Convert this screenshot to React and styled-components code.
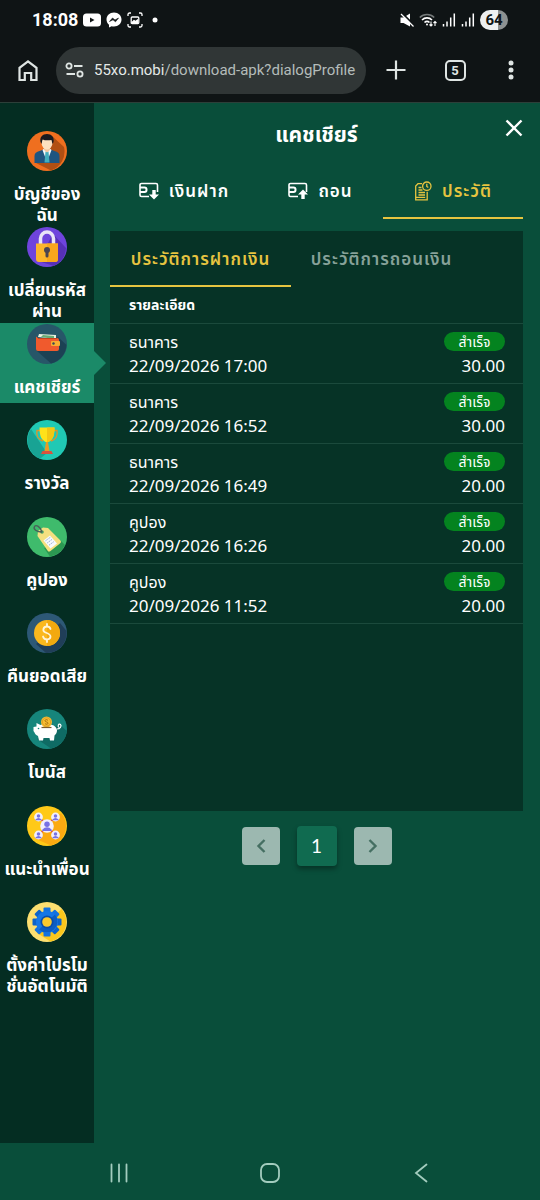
import React from "react";
import styled, { createGlobalStyle, css } from "styled-components";

const color = {
  chrome: "#0f1415",
  pill: "#303636",
  page: "#094e3a",
  side: "#042d22",
  panel: "#063326",
  active: "#1b8a68",
  gold: "#e6c440",
  line: "#1b4a3c",
  white: "#ffffff",
};

const GlobalStyle = createGlobalStyle`
  *, *::before, *::after { box-sizing: border-box; }
  body { margin: 0; background: ${color.page}; }
  button { font: inherit; color: inherit; background: none; border: 0; padding: 0; cursor: pointer; }
  svg { display: block; flex: none; }
`;

const Page = styled.div`
  min-height: 100vh;
  display: flex;
  flex-direction: column;
  color: ${color.white};
  background: ${color.page};
  font-family: Inter, "Noto Sans Thai", "Noto Sans", sans-serif;
  font-size: 16px;
`;

/* device status bar */
const StatusBar = styled.div`
  height: 40px;
  padding: 0 32px;
  display: flex;
  align-items: center;
  justify-content: space-between;
  background: ${color.chrome};
  font-family: Roboto, sans-serif;
`;
const StatusGroup = styled.div`
  display: flex;
  align-items: center;
  gap: 5px;
`;
const Clock = styled.span`
  font-size: 18px;
  font-weight: 700;
  line-height: 20px;
`;
const Battery = styled.span`
  width: 28px;
  height: 20px;
  border-radius: 10px;
  color: ${color.chrome};
  background: linear-gradient(90deg, #eef0f0 64%, #8d9191 64%);
  font-size: 15px;
  font-weight: 700;
  line-height: 20px;
  text-align: center;
`;

/* browser toolbar */
const Toolbar = styled.header`
  height: 63px;
  padding: 7px 17px 9px 16px;
  display: flex;
  align-items: center;
  background: ${color.chrome};
  border-bottom: 1px solid #2c3f39;
  color: #dfe5e3;
  font-family: Roboto, sans-serif;
`;
const AddressBar = styled.button`
  flex: 1;
  min-width: 0;
  height: 47px;
  margin-left: 16px;
  padding: 0 8px 0 9px;
  display: flex;
  align-items: center;
  gap: 9px;
  border-radius: 24px;
  background: ${color.pill};
`;
const Url = styled.span`
  flex: 1;
  min-width: 0;
  overflow: hidden;
  white-space: nowrap;
  text-align: left;
  font-size: 15px;
  line-height: 24px;
  color: #b4bcba;
`;
const Host = styled.span`
  color: #e4e9e7;
`;
const ToolButton = styled.button`
  width: 24px;
  height: 24px;
  margin-left: ${(p) => p.$space || 0}px;
  display: grid;
  place-items: center;
`;
const TabCount = styled.span`
  width: 21px;
  height: 21px;
  border: 2px solid currentColor;
  border-radius: 5px;
  font-size: 13px;
  font-weight: 700;
  line-height: 17px;
`;

/* body */
const Body = styled.div`
  flex: 1;
  display: flex;
`;
const Sidebar = styled.nav`
  width: 94px;
  flex: none;
  padding-top: 27px;
  background: ${color.side};
`;
const SideList = styled.ul`
  min-height: 851px;
  margin: 0;
  padding: 0;
  list-style: none;
  display: flex;
  flex-direction: column;
  justify-content: space-between;
`;
const SideItem = styled.li`
  height: 80px;
`;
const SideButton = styled.button`
  position: relative;
  width: 100%;
  height: 80px;
  padding-top: 1px;
  display: flex;
  flex-direction: column;
  align-items: center;
  gap: 13px;
  font-size: 17px;
  font-weight: 700;
  line-height: 21px;
  white-space: pre;
  ${(p) =>
    p.$active &&
    css`
      background: ${color.active};
      &::after {
        content: "";
        position: absolute;
        left: 100%;
        top: 28px;
        border: 12px solid transparent;
        border-right-width: 0;
        border-left-color: ${color.active};
      }
    `}
`;

const Main = styled.main`
  flex: 1;
  min-width: 0;
  padding: 0 17px 24px 16px;
  display: flex;
  flex-direction: column;
`;
const TitleBar = styled.div`
  height: 60px;
  display: grid;
  grid-template-columns: 24px 1fr 24px;
  align-items: center;
`;
const Title = styled.h1`
  grid-column: 2;
  margin: 0;
  padding-top: 4px;
  text-align: center;
  font-size: 21px;
  font-weight: 700;
  line-height: 28px;
`;
const CloseButton = styled.button`
  height: 24px;
  margin-bottom: 10px;
  display: flex;
  align-items: center;
  justify-content: flex-end;
`;
const Tabs = styled.div`
  height: 56px;
  display: grid;
  grid-template-columns: 148fr 125fr 140fr;
`;
const tabLook = css`
  padding-top: 2px;
  border-bottom: 2px solid ${(p) => (p.$active ? color.gold : "transparent")};
  color: ${(p) => (p.$active ? color.gold : p.$idle || color.white)};
  font-size: 17px;
  font-weight: 600;
  line-height: 24px;
  letter-spacing: 1px;
  white-space: nowrap;
`;
const Tab = styled.button`
  ${tabLook}
  display: flex;
  align-items: center;
  justify-content: center;
  gap: 10px;
`;
const Panel = styled.section`
  min-height: 580px;
  margin-top: 12px;
  background: ${color.panel};
`;
const SubTabs = styled.div`
  height: 56px;
  display: flex;
`;
const SubTab = styled.button`
  ${tabLook}
  min-width: 181px;
`;
const History = styled.table`
  width: 100%;
  border-collapse: collapse;
`;
const HeadCell = styled.th`
  height: 36px;
  padding: 0 19px;
  border-bottom: 1px solid ${color.line};
  text-align: left;
  font-size: 14px;
  font-weight: 700;
  line-height: 20px;
`;
const Cell = styled.td`
  height: 60px;
  padding: 6px 18px 4px 19px;
  border-bottom: 1px solid ${color.line};
  text-align: ${(p) => (p.$end ? "right" : "left")};
  vertical-align: top;
  font-size: 16px;
  line-height: 24px;
`;
const Line = styled.div`
  height: 24px;
  display: flex;
  align-items: center;
  justify-content: ${(p) => (p.$end ? "flex-end" : "flex-start")};
`;
const Figure = styled(Line)`
  font-family: "Noto Sans", sans-serif;
  font-size: 17px;
`;
const Badge = styled.span`
  width: 61px;
  height: 19px;
  border-radius: 10px;
  background: #04831f;
  font-size: 14px;
  line-height: 19px;
  text-align: center;
`;

const Pagination = styled.nav`
  margin-top: 15px;
  display: flex;
  align-items: center;
  justify-content: center;
  gap: 17px;
`;
const PageArrow = styled.button`
  width: 38px;
  height: 38px;
  display: grid;
  place-items: center;
  border-radius: 4px;
  background: #9cb8b0;
  color: #456f62;
`;
const PageNumber = styled.button`
  width: 40px;
  height: 40px;
  border-radius: 4px;
  background: #106b50;
  box-shadow: 0 3px 5px rgba(0, 0, 0, 0.35);
  font-family: Lato, sans-serif;
  font-size: 19px;
  line-height: 40px;
`;

const SystemNav = styled.footer`
  height: 57px;
  padding: 2px 8% 0;
  display: grid;
  grid-template-columns: repeat(3, 1fr);
  place-items: center;
  color: #a3ccbe;
`;

/* sidebar drawings */
const Disc = ({ fill, shade, shadeFill, children }) => (
  <svg width="40" height="40" viewBox="0 0 40 40" aria-hidden="true">
    <circle cx="20" cy="20" r="20" fill={fill} />
    {shade && <path d={shade} fill={shadeFill} />}
    {children}
  </svg>
);

const AccountIcon = () => (
  <Disc fill="#ef6f1f" shade="M25 5l12 11a20 20 0 0 1-13 23.500L9 32z" shadeFill="#b14f13">
    <path d="M7.500 32v-7c0-3 2-4 5-5l4-1.500h7l4 1.500c3 1 5 2 5 5v7z" fill="#1f5580" />
    <path d="M15.500 19l4.500 12 4.500-12-2-2h-5z" fill="#f4f8fa" />
    <path d="M18.500 20.500h3l1 11h-5z" fill="#41aebe" />
    <path d="M17 14h6v5l-3 2.500-3-2.500z" fill="#f3c69f" />
    <ellipse cx="20" cy="12" rx="5.500" ry="6.500" fill="#fde0bf" />
    <path d="M13.500 11c-1-5 2-8 6.500-8s7.500 3 6.500 8l-1 2-1-4c-3 .5-7 .5-9-.5l-1 4.500z" fill="#191b20" />
  </Disc>
);
const LockIcon = () => (
  <Disc fill="#6f44dc" shade="M26 7l13 14a20 20 0 0 1-12 18L11 34z" shadeFill="#5730b6">
    <path d="M13.500 18v-6.500a6.500 6.500 0 0 1 13 0V18" fill="none" stroke="#e9e4f7" strokeWidth="3.500" />
    <path d="M9 16.500h22V32a3 3 0 0 1-3 3H12a3 3 0 0 1-3-3z" fill="#fcb52b" />
    <path d="M20 16.500h11V32a3 3 0 0 1-3 3h-8z" fill="#f8a61c" />
    <circle cx="20" cy="23" r="3" fill="#4a4450" />
    <path d="M18.500 23h3v6a1.500 1.500 0 0 1-3 0z" fill="#4a4450" />
  </Disc>
);
const WalletIcon = () => (
  <Disc fill="#275668" shade="M31 13l8.500 8A20 20 0 0 1 24 39.500L10 27z" shadeFill="#1c4254">
    <path d="M11 13l1-3 17 1v4z" fill="#e8f1df" />
    <path d="M14 13l2-2 11 1v3z" fill="#68ab76" />
    <path d="M9 12.500l2 1.500h19a2 2 0 0 1 2 2v9a2 2 0 0 1-2 2H11a2 2 0 0 1-2-2z" fill="#f05a2d" />
    <path d="M11 14.500h19" stroke="#c7411d" strokeWidth="1" />
    <rect x="24" y="17" width="9" height="5" rx="1" fill="#f8ad32" />
    <circle cx="26.500" cy="19.500" r="1.200" fill="#374956" />
  </Disc>
);
const TrophyIcon = () => (
  <Disc fill="#20c9b4" shade="M4 9l16 24-7 5.700A20 20 0 0 1 4 9z" shadeFill="#18a394">
    <path d="M13 10.500h-3c-1 5 1.500 9 6 10.500M27 10.500h3c1 5-1.500 9-6 10.500" fill="none" stroke="#e0922a" strokeWidth="1.400" />
    <path d="M12.500 7.500h15c0 9-2 13-7.500 15-5.500-2-7.500-6-7.500-15z" fill="#ffe11a" />
    <path d="M20 7.500h7.500c0 9-2 13-7.500 15z" fill="#f3c714" />
    <path d="M19 22h2l1.500 9h-5z" fill="#e99b25" />
    <path d="M15.500 31h9l1.500 3H14z" fill="#d9533d" />
  </Disc>
);
const CouponIcon = () => (
  <Disc fill="#3fbb6c" shade="M33 23l5 5a20 20 0 0 1-15 11.500L17 31z" shadeFill="#2c9852">
    <path d="M11 14l5-3.500 5 .5L33.500 23.500a2 2 0 0 1-.3 2.800L23.500 34a2 2 0 0 1-3-.6L10.500 19z" fill="#f4e080" />
    <path d="M16.500 23.500l6.500-5 7 8-6.500 5z" fill="#f7fafd" />
    <path d="M18.500 23.800l5-3.600M20.200 26l5-3.700M22 28.200l5-3.700" stroke="#9db2d3" strokeWidth="1" strokeDasharray="1.500 .7" />
    <circle cx="15" cy="15" r="1.800" fill="#47a365" />
    <path d="M15 15C9.500 15 6 12 7.500 9.500S13.500 10 15 15" fill="none" stroke="#49615a" strokeWidth="1.400" />
  </Disc>
);
const RefundIcon = () => (
  <Disc fill="#2d5876" shade="M33 10l6.500 8A20 20 0 0 1 19 40l-10-9z" shadeFill="#203e58">
    <circle cx="20" cy="20" r="13" fill="#fbb81e" />
    <path d="M20 7a13 13 0 0 1 0 26z" fill="#f3a90f" />
    <path d="M23.500 16c-.5-2-2-2.500-3.500-2.500-4 0-5 4.500-1.500 6 3 1 5 1.800 5 4 0 3.800-6.500 4-7.500 0M20 11v2.500M20 26.500V29" fill="none" stroke="#fff4d7" strokeWidth="1.800" strokeLinecap="round" />
  </Disc>
);
const BonusIcon = () => (
  <Disc fill="#16857b" shade="M32 15l7.800 7A20 20 0 0 1 24 39.500L10 30z" shadeFill="#0f6b64">
    <path d="M9.500 14l4 2c3-1.500 12-1.500 15 2 3 3 1 7-1 8.500l-.5 5h-4l-.5-2.500h-6l-.5 2.500h-4l-1-4.500c-2-1-3-2-3.500-3.500L6.500 22v-4l3-.5z" fill="#fff" />
    <circle cx="19.500" cy="13" r="5.500" fill="#f6bc32" />
    <circle cx="19.500" cy="13" r="4.200" fill="none" stroke="#d4951f" strokeWidth=".7" />
    <path d="M21 11.500c-1-1.500-3-1-3 .2 0 1.500 3 1 3 2.500 0 1.300-2.200 1.500-3 .2" fill="none" stroke="#a36c12" strokeWidth=".9" />
    <path d="M14.500 18.500h10" stroke="#7e5b29" strokeWidth="1.200" />
    <circle cx="11.500" cy="19.500" r=".8" fill="#16857b" />
    <path d="M30 20c3 0 5-3 3.500-4.500S30 17 32 18.500" fill="none" stroke="#fff" strokeWidth="1.200" />
  </Disc>
);
const Person = ({ x, y, r }) => (
  <g>
    <circle cx={x} cy={y} r={r} fill="#f1effc" />
    <circle cx={x} cy={y - r * 0.25} r={r * 0.4} fill="#7671e4" />
    <path d={`M${x - r * 0.7} ${y + r * 0.75}v-${r * 0.2}q${r * 0.7}-${r * 0.7} ${r * 1.4} 0v${r * 0.2}z`} fill="#7671e4" />
  </g>
);
const FriendsIcon = () => (
  <Disc fill="#ffc918" shade="M34 7a20 20 0 0 1-10 32.500L9 33z" shadeFill="#fbaa12">
    <path d="M12 11l16 18M28 11L12 29" stroke="#db4f43" strokeWidth="1.800" />
    <Person x={11.5} y={11} r={4.4} />
    <Person x={28.5} y={11} r={4.4} />
    <Person x={11.5} y={29} r={4.4} />
    <Person x={28.5} y={29} r={4.4} />
    <Person x={20} y={20} r={6.8} />
  </Disc>
);
const SettingsIcon = () => (
  <Disc fill="#fddf70" shade="M34.500 7a20 20 0 0 1-11 32.500L10 31z" shadeFill="#fbc71c">
    {[0, 45, 90, 135].map((angle) => (
      <rect key={angle} x="16.500" y="5.500" width="7" height="29" rx="1" fill={angle > 45 ? "#0d63c9" : "#1472df"} transform={`rotate(${angle} 20 20)`} />
    ))}
    <circle cx="20" cy="20" r="11" fill="#1677e6" />
    <path d="M28 12.500A11 11 0 0 1 12 27.500z" fill="#0d5dc2" />
    <circle cx="20" cy="20" r="6.500" fill="#0c4da8" />
    <circle cx="20" cy="20" r="4.800" fill="#fcc92d" />
  </Disc>
);

/* line drawings */
const CardArrowIcon = ({ up }) => (
  <svg width="20" height="18" viewBox="0 0 20 18" fill="none" stroke="currentColor" strokeWidth="1.600" aria-hidden="true">
    <path d="M18.500 10V3A1.500 1.500 0 0 0 17 1.500H2.500A1.500 1.500 0 0 0 1 3v10a1.500 1.500 0 0 0 1.500 1.500H10" />
    <path d="M1 5.500h4.500a2 2 0 0 1 2 2v.5a2 2 0 0 1-2 2H1" strokeWidth="2" />
    <path d={up ? "M15 7.500l5 5h-3.300v4.500h-3.400v-4.500H10z" : "M15 17.500l5-5h-3.300V8h-3.400v4.500H10z"} fill="currentColor" stroke="none" />
  </svg>
);
const HistoryIcon = () => (
  <svg width="18" height="20" viewBox="0 0 18 20" fill="none" stroke="currentColor" strokeWidth="1.300" aria-hidden="true">
    <path d="M8 2.700H4L1.700 5v13.800h11.500v-8M1.700 16.300h9.500M4.500 6.500h3M4.500 9h4M4.500 11.500h6.500M4.500 14h6.500" />
    <circle cx="12.800" cy="5.200" r="4.200" />
    <path d="M12.800 2.800v2.700l1.500 1" />
  </svg>
);
const CloseIcon = () => (
  <svg width="18" height="18" viewBox="0 0 18 18" stroke="#fff" strokeWidth="2.400" aria-hidden="true">
    <path d="M1.500 1.500l15 15M16.500 1.500l-15 15" />
  </svg>
);
const Chevron = ({ next }) => (
  <svg width="10" height="14" viewBox="0 0 10 14" fill="none" stroke="currentColor" strokeWidth="2.400" aria-hidden="true">
    <path d={next ? "M1.500 1l6 6-6 6" : "M8.500 1l-6 6 6 6"} />
  </svg>
);

const YoutubeIcon = () => (
  <svg width="18" height="14" viewBox="0 0 18 14" aria-hidden="true">
    <rect width="18" height="13" y=".5" rx="3.500" fill="#fff" />
    <path d="M7 4.500l4.500 2.500L7 9.500z" fill={color.chrome} />
  </svg>
);
const MessengerIcon = () => (
  <svg width="16" height="16" viewBox="0 0 16 16" aria-hidden="true">
    <path d="M8 .5C3.600.5.5 3.600.5 7.500c0 2.200 1 4 2.500 5.300V15.500l2.600-1.300c.8.2 1.600.3 2.400.3 4.400 0 7.500-3 7.500-7S12.400.5 8 .5z" fill="#fff" />
    <path d="M3.500 9.500l3-3.500 2.500 2 3.500-2-3 3.800-2.500-2z" fill={color.chrome} stroke={color.chrome} strokeWidth=".6" />
  </svg>
);
const CaptureIcon = () => (
  <svg width="16" height="16" viewBox="0 0 16 16" fill="none" stroke="#fff" strokeWidth="1.300" aria-hidden="true">
    <path d="M1 4V2.500A1.500 1.500 0 0 1 2.500 1H4M12 1h1.500A1.500 1.500 0 0 1 15 2.500V4M15 12v1.500a1.500 1.500 0 0 1-1.500 1.500H12M4 15H2.500A1.500 1.500 0 0 1 1 13.500V12" />
    <rect x="4.200" y="5" width="7.600" height="6.500" rx="1" />
    <path d="M5 10.500l2-2 1.500 1L10.500 8v2.500z" fill="#fff" />
  </svg>
);
const DotIcon = () => (
  <svg width="14" height="6" viewBox="0 0 14 6" aria-hidden="true">
    <circle cx="7" cy="3" r="2.500" fill="#fff" />
  </svg>
);
const MuteIcon = () => (
  <svg width="14" height="14" viewBox="0 0 14 14" aria-hidden="true">
    <path d="M.5 4.500H3.500L10 .5v13L3.500 10H.5z" fill="#fff" />
    <path d="M2.500.5l12 12" stroke={color.chrome} strokeWidth="1.800" />
    <path d="M1 1l12.500 12.500" stroke="#fff" strokeWidth="1.300" />
  </svg>
);
const WifiIcon = () => (
  <svg width="18" height="14" viewBox="0 0 18 14" fill="none" stroke="#fff" strokeWidth="1.600" aria-hidden="true">
    <path d="M.8 4.500a10 10 0 0 1 14.400 0" stroke="#757a7a" />
    <path d="M3 7a7 7 0 0 1 10 0M5.500 9.500a3.600 3.600 0 0 1 5 0" />
    <circle cx="8" cy="11.500" r="1" fill="#fff" stroke="none" />
    <path d="M12 8.500v4.500M10.500 11.500l1.500 1.500 1.500-1.500M16 13V8.500M14.500 10L16 8.500l1.500 1.500" strokeWidth="1.100" />
  </svg>
);
const SignalIcon = () => (
  <svg width="14" height="14" viewBox="0 0 14 14" stroke="#fff" strokeWidth="1.500" aria-hidden="true">
    <path d="M1.500 11v2.500M5 8.500v5M8.700 4.500v9M12.300.5v13" />
  </svg>
);
const HomeIcon = () => (
  <svg width="22" height="23" viewBox="0 0 22 23" fill="none" stroke="currentColor" strokeWidth="2.200" aria-hidden="true">
    <path d="M2.500 21V8.800L11 2.300l8.500 6.500V21h-5.300v-7H7.800v7z" />
  </svg>
);
const TuneIcon = () => (
  <svg width="20" height="16" viewBox="0 0 20 16" fill="none" stroke="currentColor" strokeWidth="1.800" aria-hidden="true">
    <circle cx="4" cy="4" r="2.600" />
    <path d="M9 4h8.500M1.500 12H10" />
    <circle cx="15" cy="12" r="2.600" />
  </svg>
);
const PlusIcon = () => (
  <svg width="20" height="20" viewBox="0 0 20 20" stroke="currentColor" strokeWidth="2.200" aria-hidden="true">
    <path d="M10 .5v19M.5 10h19" />
  </svg>
);
const MoreIcon = () => (
  <svg width="6" height="20" viewBox="0 0 6 20" fill="currentColor" aria-hidden="true">
    <circle cx="3" cy="3" r="2.500" />
    <circle cx="3" cy="10" r="2.500" />
    <circle cx="3" cy="17" r="2.500" />
  </svg>
);

const menu = [
  { label: "บัญชีของ\nฉัน", Icon: AccountIcon },
  { label: "เปลี่ยนรหัส\nผ่าน", Icon: LockIcon },
  { label: "แคชเชียร์", Icon: WalletIcon, active: true },
  { label: "รางวัล", Icon: TrophyIcon },
  { label: "คูปอง", Icon: CouponIcon },
  { label: "คืนยอดเสีย", Icon: RefundIcon },
  { label: "โบนัส", Icon: BonusIcon },
  { label: "แนะนำเพื่อน", Icon: FriendsIcon },
  { label: "ตั้งค่าโปรโม\nชั่นอัตโนมัติ", Icon: SettingsIcon },
];

const records = [
  { type: "ธนาคาร", date: "22/09/2026 17:00", amount: "30.00" },
  { type: "ธนาคาร", date: "22/09/2026 16:52", amount: "30.00" },
  { type: "ธนาคาร", date: "22/09/2026 16:49", amount: "20.00" },
  { type: "คูปอง", date: "22/09/2026 16:26", amount: "20.00" },
  { type: "คูปอง", date: "20/09/2026 11:52", amount: "20.00" },
];

export default function App() {
  return (
    <Page lang="th">
      <GlobalStyle />
      <StatusBar>
        <StatusGroup>
          <Clock>18:08</Clock>
          <YoutubeIcon />
          <MessengerIcon />
          <CaptureIcon />
          <DotIcon />
        </StatusGroup>
        <StatusGroup>
          <MuteIcon />
          <WifiIcon />
          <SignalIcon />
          <SignalIcon />
          <Battery>64</Battery>
        </StatusGroup>
      </StatusBar>
      <Toolbar>
        <ToolButton aria-label="Home">
          <HomeIcon />
        </ToolButton>
        <AddressBar>
          <TuneIcon />
          <Url>
            <Host>55xo.mobi</Host>/download-apk?dialogProfile
          </Url>
        </AddressBar>
        <ToolButton $space={18} aria-label="New tab">
          <PlusIcon />
        </ToolButton>
        <ToolButton $space={35} aria-label="Tabs">
          <TabCount>5</TabCount>
        </ToolButton>
        <ToolButton $space={32} aria-label="More">
          <MoreIcon />
        </ToolButton>
      </Toolbar>

      <Body>
        <Sidebar>
          <SideList>
            {menu.map(({ label, Icon, active }) => (
              <SideItem key={label}>
                <SideButton $active={active}>
                  <Icon />
                  <span>{label}</span>
                </SideButton>
              </SideItem>
            ))}
          </SideList>
        </Sidebar>

        <Main>
          <TitleBar>
            <Title>แคชเชียร์</Title>
            <CloseButton aria-label="ปิด">
              <CloseIcon />
            </CloseButton>
          </TitleBar>
          <Tabs>
            <Tab>
              <CardArrowIcon />
              เงินฝาก
            </Tab>
            <Tab>
              <CardArrowIcon up />
              ถอน
            </Tab>
            <Tab $active>
              <HistoryIcon />
              ประวัติ
            </Tab>
          </Tabs>
          <Panel>
            <SubTabs>
              <SubTab $active>ประวัติการฝากเงิน</SubTab>
              <SubTab $idle="#87a299">ประวัติการถอนเงิน</SubTab>
            </SubTabs>
            <History>
              <thead>
                <tr>
                  <HeadCell colSpan={2}>รายละเอียด</HeadCell>
                </tr>
              </thead>
              <tbody>
                {records.map((r) => (
                  <tr key={r.date}>
                    <Cell>
                      <Line>{r.type}</Line>
                      <Figure>{r.date}</Figure>
                    </Cell>
                    <Cell $end>
                      <Line $end>
                        <Badge>สำเร็จ</Badge>
                      </Line>
                      <Figure $end>{r.amount}</Figure>
                    </Cell>
                  </tr>
                ))}
              </tbody>
            </History>
          </Panel>
          <Pagination aria-label="หน้า">
            <PageArrow aria-label="ก่อนหน้า">
              <Chevron />
            </PageArrow>
            <PageNumber>1</PageNumber>
            <PageArrow aria-label="ถัดไป">
              <Chevron next />
            </PageArrow>
          </Pagination>
        </Main>
      </Body>

      <SystemNav>
        <ToolButton aria-label="Recents">
          <svg width="20" height="20" viewBox="0 0 20 20" stroke="currentColor" strokeWidth="1.800" strokeLinecap="round">
            <path d="M2.500 1.500v17M10 1.500v17M17.500 1.500v17" />
          </svg>
        </ToolButton>
        <ToolButton aria-label="Home screen">
          <svg width="20" height="20" viewBox="0 0 20 20" fill="none" stroke="currentColor" strokeWidth="1.800">
            <rect x="1" y="1" width="18" height="18" rx="6" />
          </svg>
        </ToolButton>
        <ToolButton aria-label="Back">
          <svg width="14" height="20" viewBox="0 0 14 20" fill="none" stroke="currentColor" strokeWidth="1.800" strokeLinecap="round">
            <path d="M12.500 1.500L2 10l10.500 8.500" />
          </svg>
        </ToolButton>
      </SystemNav>
    </Page>
  );
}
